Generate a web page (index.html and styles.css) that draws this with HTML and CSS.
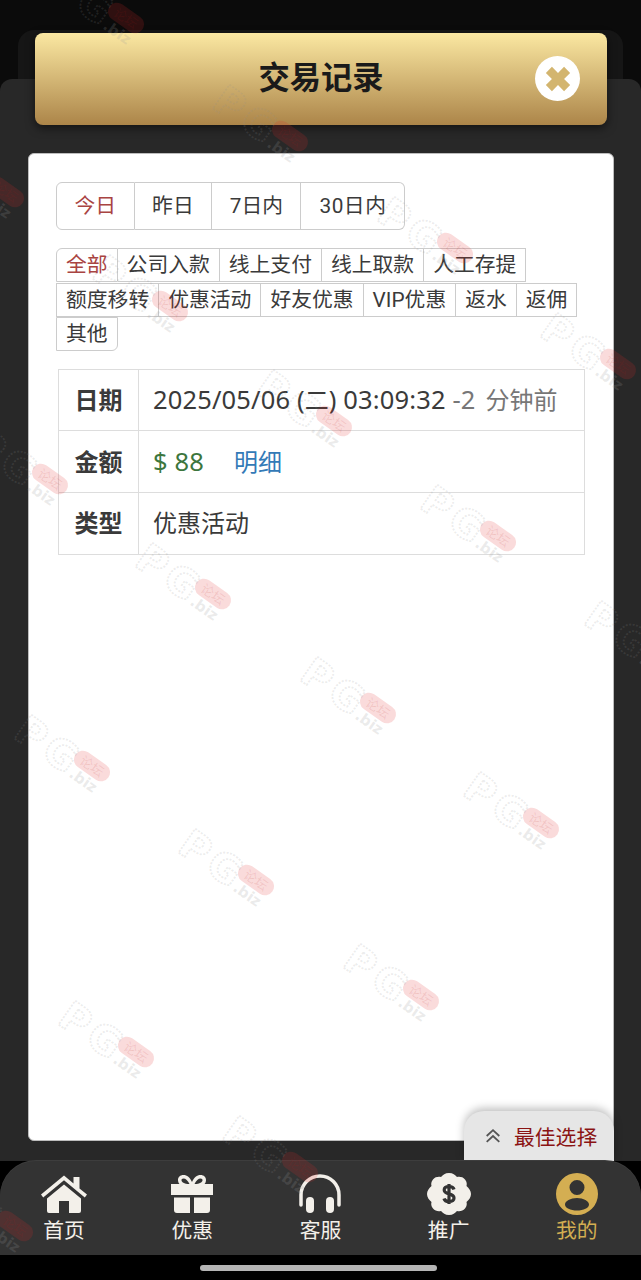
FILE: index.html
```html
<!DOCTYPE html>
<html lang="zh-CN">
<head>
  <meta charset="UTF-8">
  <meta content="width=device-width, initial-scale=1.0" name="viewport">
  <title>交易记录</title>
  <link rel="stylesheet" href="styles.css">
</head>
<body>
<div class="screen">
  <div class="backdrop">
    <div class="panel">
      <header class="title-bar">
        <h1>交易记录</h1>
        <button class="close" type="button">
          <svg viewBox="4.500 4.500 15 15" width="26" height="26"><path d="M5 8.500 8.500 5 12 8.500 15.500 5 19 8.500 15.500 12 19 15.500 15.500 19 12 15.500 8.500 19 5 15.500 8.500 12Z"/></svg>
        </button>
      </header>
      <main class="card">
        <div class="range-tabs">
          <a class="active">今日</a><a>昨日</a><a>7日内</a><a>30日内</a>
        </div>
        <div class="type-tabs">
          <a class="active first">全部</a><a>公司入款</a><a>线上支付</a><a>线上取款</a><a>人工存提</a><a>额度移转</a><a>优惠活动</a><a>好友优惠</a><a>VIP优惠</a><a>返水</a><a>返佣</a><a class="last">其他</a>
        </div>
        <table class="record">
          <tr><th>日期</th><td><span class="num">2025/05/06 (</span>二<span class="num">) 03:09:32 </span><span class="ago"><span class="num">-2 </span>分钟前</span></td></tr>
          <tr><th>金额</th><td><span class="amount num">$ 88</span><a class="detail">明细</a></td></tr>
          <tr><th>类型</th><td>优惠活动</td></tr>
        </table>
      </main>
      <button class="best" type="button">
        <svg viewBox="0 0 20 20" width="18" height="18"><path d="M3 10 10 3.500 17 10M3 16.500 10 10 17 16.500"/></svg>
        最佳选择
      </button>
    </div>
  </div>
  <nav class="tabbar">
    <a>
      <svg viewBox="0 0 48 40" width="48" height="40"><path d="M1 20.500 24 1.500 33.500 9.500V3H39.500V14.500L47 20.500 44.800 23.400 24 6.300 3.200 23.400Z"/><path d="M7 24.500 24 10.500 41 24.500V37A2 2 0 0 1 39 39H29V27H19V39H9A2 2 0 0 1 7 37Z"/></svg>
      <span>首页</span>
    </a>
    <a>
      <svg viewBox="0 0 44 40" width="44" height="40"><path fill-rule="evenodd" d="M13.500 1C17 1 20 3.500 22 8 24 3.500 27 1 30.500 1 34 1 36 3.300 36 6 36 7.500 35.500 9 34.500 10H43V21H1V10H9.500C8.500 9 8 7.500 8 6 8 3.300 10 1 13.500 1ZM13.500 4.500C12 4.500 11.500 5.300 11.500 6.200 11.500 8 14 10 19.500 10 18 6.500 15.500 4.500 13.500 4.500ZM30.500 4.500C28.500 4.500 26 6.500 24.500 10 30 10 32.500 8 32.500 6.200 32.500 5.300 32 4.500 30.500 4.500Z"/><path d="M4 23.500H20V39H7A3 3 0 0 1 4 36ZM24 23.500H40V36A3 3 0 0 1 37 39H24Z"/></svg>
      <span>优惠</span>
    </a>
    <a>
      <svg viewBox="0 0 44 40" width="44" height="40"><path class="line" d="M3 31V21A19 19 0 0 1 41 21V31"/><rect x="8" y="23" width="8" height="16" rx="4"/><rect x="28" y="23" width="8" height="16" rx="4"/></svg>
      <span>客服</span>
    </a>
    <a>
      <svg viewBox="0 0 44 42" width="44" height="42"><path d="M22 0C26 0 28 2 30 4 33 3.500 36 4 38 6.500 40 9 40 11 39.500 13 42 15 44 18 44 21 44 24 42 27 39.500 29 40 31 40 33 38 35.500 36 38 33 38.500 30 38 28 40 26 42 22 42 18 42 16 40 14 38 11 38.500 8 38 6 35.500 4 33 4 31 4.500 29 2 27 0 24 0 21 0 18 2 15 4.500 13 4 11 4 9 6 6.500 8 4 11 3.500 14 4 16 2 18 0 22 0Z"/><path class="dollar" d="M27 16.500C26.500 14.500 24.800 13.500 22 13.500 19 13.500 17.200 14.800 17.200 17 17.200 22.200 27 19.600 27 25 27 27.300 25 28.500 22 28.500 19.200 28.500 17.500 27.500 17 25.500M22 11V31"/></svg>
      <span>推广</span>
    </a>
    <a class="current">
      <svg viewBox="0 0 42 42" width="42" height="42"><path fill-rule="evenodd" d="M21 0A21 21 0 1 1 21 42 21 21 0 0 1 21 0ZM21 7A7.500 7.500 0 1 0 21 22 7.500 7.500 0 0 0 21 7ZM21 25C14.500 25 9 28 9 31.500 9 35 14.500 37.500 21 37.500 27.500 37.500 33 35 33 31.500 33 28 27.500 25 21 25Z"/></svg>
      <span>我的</span>
    </a>
  </nav>
  <div class="home-strip"><i></i></div>
  <svg class="watermark" width="641" height="1280">
    <defs>
      <g id="mark">
        <text class="mark-pg" x="-83" y="22">PG</text>
        <text class="mark-biz" x="-14" y="22">.biz</text>
        <rect class="mark-pill" x="-20" y="-9" width="40" height="18" rx="9"/>
        <text class="mark-pill-text" x="0" y="5" text-anchor="middle">论坛</text>
      </g>
    </defs>
    <use class="on-dark" href="#mark" transform="translate(126 18) rotate(35)"/>
    <use class="on-dark" href="#mark" transform="translate(290 136) rotate(35)"/>
    <use href="#mark" transform="translate(455 248) rotate(35)"/>
    <use href="#mark" transform="translate(618 364) rotate(35)"/>
    <use class="on-dark" href="#mark" transform="translate(6 192) rotate(35)"/>
    <use href="#mark" transform="translate(170 306) rotate(35)"/>
    <use href="#mark" transform="translate(334 421) rotate(35)"/>
    <use href="#mark" transform="translate(498 536) rotate(35)"/>
    <use href="#mark" transform="translate(662 652) rotate(35)"/>
    <use href="#mark" transform="translate(50 479) rotate(35)"/>
    <use href="#mark" transform="translate(213 594) rotate(35)"/>
    <use href="#mark" transform="translate(378 708) rotate(35)"/>
    <use href="#mark" transform="translate(541 823) rotate(35)"/>
    <use href="#mark" transform="translate(92 766) rotate(35)"/>
    <use href="#mark" transform="translate(256 880) rotate(35)"/>
    <use href="#mark" transform="translate(421 995) rotate(35)"/>
    <use href="#mark" transform="translate(136 1052) rotate(35)"/>
    <use class="on-dark" href="#mark" transform="translate(300 1167) rotate(35)"/>
    <use class="on-dark" href="#mark" transform="translate(15 1226) rotate(35)"/>
  </svg>
</div>
</body>
</html>
```
FILE: styles.css
```css
* {
  box-sizing: border-box;
}

body {
  margin: 0;
  background: #000;
  font-family: Roboto, "Noto Sans CJK SC", sans-serif;
}

.screen {
  position: relative;
  display: flex;
  flex-direction: column;
  width: 641px;
  height: 1280px;
  overflow: hidden;
  background: #000;
}

.backdrop {
  flex: 1;
  display: flex;
  min-height: 0;
  padding-top: 33px;
  background: #0b0b0b;
}

.panel {
  position: relative;
  flex: 1;
  display: flex;
  flex-direction: column;
  padding: 0 27px 20px 28px;
}

.panel::before {
  content: "";
  position: absolute;
  top: -3px;
  left: 18px;
  right: 18px;
  height: 50px;
  background: #161616;
  border-radius: 16px 16px 0 0;
}

.panel::after {
  content: "";
  position: absolute;
  top: 46px;
  left: 0;
  right: 0;
  bottom: 0;
  background: #282828;
  border-radius: 12px 12px 0 0;
}

.title-bar {
  position: relative;
  z-index: 1;
  display: flex;
  align-items: center;
  justify-content: center;
  height: 92px;
  margin: 0 7px 28px;
  background: linear-gradient(#fbe8a2, #ac8549);
  border-radius: 8px;
  box-shadow: 0 3px 10px rgba(0, 0, 0, 0.55);
}

.title-bar h1 {
  margin: 0;
  color: #1a1a1a;
  font-size: 31.300px;
  font-weight: 700;
  line-height: 1;
}

.close {
  position: absolute;
  top: 23px;
  right: 27px;
  display: grid;
  width: 45px;
  height: 45px;
  place-content: center;
  padding: 0;
  background: #fff;
  border: none;
  border-radius: 50%;
}

.close svg {
  display: block;
  fill: #d3b56f;
}

.card {
  position: relative;
  z-index: 1;
  flex: 1;
  padding: 28px 27px;
  background: #fff;
  border: 1px solid #bdbdbd;
  border-radius: 6px;
}

.range-tabs {
  display: flex;
  width: max-content;
  margin-bottom: 18px;
  color: #3a3a3a;
  font-size: 20.800px;
}

.range-tabs a {
  display: block;
  height: 48px;
  padding: 0 17.500px;
  border: 1px solid #ccc;
  border-left: none;
  line-height: 46px;
}

.range-tabs a:first-child {
  border-left: 1px solid #ccc;
  border-radius: 6px 0 0 6px;
}

.range-tabs a:last-child {
  padding: 0 18px;
  border-radius: 0 6px 6px 0;
  letter-spacing: 0.500px;
}

.range-tabs a.active,
.type-tabs a.active {
  color: #a94442;
}

.type-tabs {
  display: flex;
  flex-wrap: wrap;
  margin-bottom: 18px;
  color: #3a3a3a;
  font-size: 20.800px;
}

.type-tabs a {
  display: block;
  height: 34px;
  padding: 0 9px;
  margin-bottom: 0.500px;
  border: 1px solid #ccc;
  border-left: none;
  line-height: 33px;
}

.type-tabs a.first {
  border-left: 1px solid #ccc;
  border-radius: 6px 0 0 0;
}

.type-tabs a:nth-child(6),
.type-tabs a.last {
  border-left: 1px solid #ccc;
}

.type-tabs a.last {
  border-radius: 0 0 6px 0;
}

.record {
  width: 527px;
  margin: -1px 0 0 2px;
  border-collapse: collapse;
  color: #3a3a3a;
  font-size: 24px;
}

.record th,
.record td {
  height: 61.700px;
  padding: 0 14px 3px;
  border: 1px solid #ddd;
  text-align: left;
  font-weight: 400;
}

.record th {
  width: 80px;
  padding: 0 0 3px;
  text-align: center;
  font-weight: 700;
}

.num {
  font-family: "Noto Sans", sans-serif;
  font-size: 25.500px;
  letter-spacing: 0.150px;
}

.ago {
  color: #777;
}

.ago .num {
  margin-right: 3px;
}

.amount {
  color: #3c763d;
}

.detail {
  margin-left: 30px;
  color: #337ab7;
}

.best {
  position: absolute;
  right: 27px;
  bottom: 0;
  z-index: 2;
  display: flex;
  align-items: center;
  gap: 12px;
  width: 150px;
  height: 50px;
  padding: 0 0 0 20px;
  background: #e6e6e6;
  border: none;
  border-radius: 20px 20px 0 0;
  box-shadow: 0 -3px 8px rgba(0, 0, 0, 0.25);
  color: #8b1414;
  font: inherit;
  font-size: 20.800px;
}

.best svg {
  fill: none;
  stroke: #555;
  stroke-width: 2;
}

.tabbar {
  position: relative;
  z-index: 3;
  display: flex;
  flex: none;
  justify-content: space-around;
  height: 94px;
  padding: 12px 0 0;
  background: #333;
  border-radius: 36px 36px 0 0;
  box-shadow: 0 -1px 0 #3d3d3d;
}

.tabbar a {
  display: flex;
  flex: none;
  flex-direction: column;
  align-items: center;
  justify-content: flex-start;
  width: 128px;
  color: #f3f0ea;
  font-size: 20.800px;
  line-height: 28px;
}

.tabbar span {
  margin-top: 2px;
}

.tabbar svg {
  display: block;
  height: 42px;
  fill: #f3f0ea;
}

.tabbar .line {
  fill: none;
  stroke: #f3f0ea;
  stroke-width: 3.500;
  stroke-linecap: round;
}

.tabbar .dollar {
  fill: none;
  stroke: #333;
  stroke-width: 3.200;
}

.tabbar .current {
  color: #d4ae52;
}

.tabbar .current svg {
  fill: #d4ae52;
}

.home-strip {
  flex: none;
  display: flex;
  justify-content: center;
  height: 25px;
  padding: 10px 4px 0 0;
  background: #000;
}

.home-strip i {
  display: block;
  width: 237px;
  height: 6px;
  background: #b5b5b5;
  border-radius: 3px;
}

.watermark {
  position: absolute;
  top: 0;
  left: 0;
  z-index: 4;
  pointer-events: none;
}

.mark-pg {
  fill: none;
  stroke: #8f8f8f;
  stroke-width: 1.800;
  stroke-dasharray: 2 1.500;
  stroke-opacity: 0.18;
  font-family: "DejaVu Sans", sans-serif;
  font-size: 40px;
  font-weight: 700;
  letter-spacing: 5px;
}

.mark-biz {
  fill: #999;
  fill-opacity: 0.2;
  font-family: "DejaVu Sans", sans-serif;
  font-size: 15px;
  font-weight: 700;
}

.mark-pill {
  fill: #e02a2a;
  fill-opacity: 0.17;
}

.mark-pill-text {
  fill: #b01818;
  fill-opacity: 0.12;
  font-family: "Noto Sans CJK SC", sans-serif;
  font-size: 13px;
}

.on-dark .mark-pill {
  fill-opacity: 0.36;
}

.on-dark .mark-pg {
  stroke-opacity: 0.32;
}

.on-dark .mark-pill-text {
  fill: #000;
  fill-opacity: 0.3;
}
```
